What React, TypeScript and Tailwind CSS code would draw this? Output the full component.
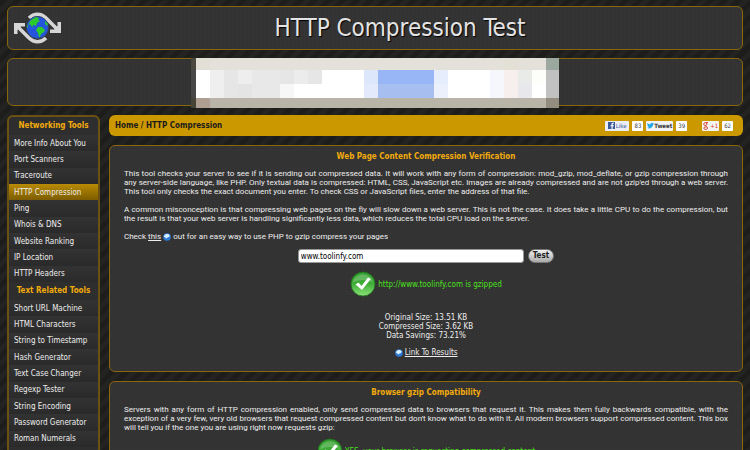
import type { ReactNode } from 'react'

const networkingTools = [
  'More Info About You',
  'Port Scanners',
  'Traceroute',
  'HTTP Compression',
  'Ping',
  'Whois & DNS',
  'Website Ranking',
  'IP Location',
  'HTTP Headers',
]

const textTools = [
  'Short URL Machine',
  'HTML Characters',
  'String to Timestamp',
  'Hash Generator',
  'Text Case Changer',
  'Regexp Tester',
  'String Encoding',
  'Password Generator',
  'Roman Numerals',
]

// x, y, width, height, fill
const adBlocks: [number, number, number, number, string][] = [
  [0, 0, 5, 12, '#4b493f'],
  [0, 12, 5, 28, '#484848'],
  [0, 40, 5, 10, '#464337'],
  [5, 0, 350, 12, '#e4e0da'],
  [5, 0, 14, 12, '#e2dfd7'],
  [313, 0, 14, 12, '#e3e1d6'],
  [355, 0, 13, 12, '#9ba8a0'],
  [5, 12, 350, 28, '#ffffff'],
  [19, 12, 14, 28, '#efefef'],
  [33, 12, 14, 28, '#e6e6e6'],
  [47, 12, 14, 14, '#eeeeee'],
  [47, 26, 14, 14, '#e4e4e4'],
  [61, 12, 28, 28, '#e8e8e8'],
  [89, 12, 14, 14, '#e6e6e6'],
  [89, 26, 14, 14, '#f7f7f7'],
  [103, 12, 14, 14, '#ececec'],
  [117, 12, 14, 14, '#e6e6e6'],
  [173, 12, 14, 14, '#dce7fc'],
  [173, 26, 14, 14, '#e3eafb'],
  [187, 12, 56, 14, '#98b6f5'],
  [187, 26, 56, 14, '#a6bef0'],
  [243, 12, 14, 14, '#e6eefd'],
  [243, 26, 14, 14, '#ebf0fc'],
  [299, 12, 14, 28, '#f5f7fd'],
  [313, 12, 14, 28, '#f6efed'],
  [327, 12, 14, 14, '#e8ebe7'],
  [327, 26, 14, 14, '#e7e7ec'],
  [341, 12, 14, 14, '#fdfdfa'],
  [355, 12, 13, 28, '#c1c1c1'],
  [5, 40, 350, 10, '#b9b4a8'],
  [5, 40, 14, 10, '#ae9f92'],
  [355, 40, 13, 10, '#938d80'],
]

const panel =
  'rounded-md border border-[#8a670b] bg-[#333] bg-[repeating-linear-gradient(90deg,rgba(255,255,255,0.01)_0_1px,transparent_1px_4px),repeating-linear-gradient(0deg,rgba(0,0,0,0.02)_0_1px,transparent_1px_3px)]'

const copy = "text-justify font-['Roboto',sans-serif]"

const Logo = () => (
  <svg viewBox="0 0 48 32" className="h-8 w-12" aria-hidden="true">
    <g fill="none" stroke="#d6d6d6" strokeWidth="3.6">
      <path d="M16 6C21 1 28 1 33 6L44 17" />
      <path d="M33 26C28 31 21 31 16 26L5 15" />
    </g>
    <path fill="#d6d6d6" d="M1 11h11v3.500H8l-3.500 3.500v4H1zM48 10v11H37v-3.500h4l3.500-3.500v-4z" />
    <circle cx="24.500" cy="15.500" r="11" fill="#2455dc" stroke="#37455c" strokeWidth="0.700" />
    <path
      fill="#2ccb2c"
      d="M18 8l5-3 3 1-1 2 2 1-3 2-1 3-2-1-2 1 2 2-2-1-2-3-2 1zM25 15l4 0 3 3-1 2-3 2-1 3-1 0-1-4-2-3zM32 9l3 3-1 2-2-2zM14 12l1 3-1 1z"
    />
  </svg>
)

const CheckIcon = () => (
  <svg viewBox="0 0 26 26" className="size-[26px] shrink-0" aria-hidden="true">
    <defs>
      <linearGradient id="check-ball" x1="0" y1="0" x2="0" y2="1">
        <stop offset="0" stopColor="#2f9b2b" />
        <stop offset="0.500" stopColor="#3fae38" />
        <stop offset="1" stopColor="#8ce279" />
      </linearGradient>
    </defs>
    <circle cx="13" cy="13" r="12" fill="url(#check-ball)" stroke="#1f6e1e" strokeWidth="0.800" />
    <path d="M3 11a10.200 9.500 0 0 1 20 0q-10-4-20 0z" fill="#fff" opacity="0.220" />
    <path d="M5.500 13.500l3-2 3 3.500L18 6.500l2.800 1.500L12 19z" fill="#fff" />
  </svg>
)

const GlobeIcon = () => (
  <svg viewBox="0 0 8 8" className="inline-block size-2 align-[-2px]" aria-hidden="true">
    <circle cx="4" cy="4" r="3.800" fill="#2c7ad6" />
    <path d="M0.800 3.400a3.400 3.400 0 0 1 6-1L6 4 4.500 4.600 3.600 5.600z" fill="#d8efff" />
  </svg>
)

const ToolList = ({ title, items }: { title: string; items: string[] }) => (
  <section>
    <h2 className="py-[3px] text-center leading-3 font-bold text-[#f2ab0c]">{title}</h2>
    <ul className="grid h-[147px] auto-rows-fr">
      {items.map((item) => (
        <li
          key={item}
          className={
            item === 'HTTP Compression'
              ? 'flex items-center bg-linear-to-b from-[#b98b04] to-[#7c5c00] px-[5px]'
              : 'flex items-center bg-linear-to-b from-[#333] to-[#2a2a2a] px-[5px]'
          }
        >
          <a href="#" className="whitespace-nowrap">
            {item}
          </a>
        </li>
      ))}
    </ul>
  </section>
)

const Count = ({ children }: { children: ReactNode }) => (
  <span className="rounded-[1px] bg-white px-[2px] text-center text-[6px] leading-[10px] text-[#444]">
    {children}
  </span>
)

const App = () => {
  return (
    <div className="flex h-screen flex-col gap-2 overflow-hidden bg-[#20201e] bg-[repeating-linear-gradient(135deg,#1d1d1c_0_5px,#232321_5px_10px)] px-[7px] pt-[6px] font-['DejaVu_Sans_Condensed','DejaVu_Sans',sans-serif] text-[8px] leading-[9px] text-[#eee]">
      <header className={`${panel} flex shrink-0 items-center py-[5px] pl-[5px] pr-[3px]`}>
        <Logo />
        <h1 className="flex-1 text-center text-[24px] leading-[34px] text-[#e4e4e4] [text-shadow:1px_1px_1px_#000] -my-px">
          HTTP Compression Test
        </h1>
      </header>

      <div className={`${panel} relative h-12 shrink-0`}>
        <svg
          viewBox="0 0 368 50"
          className="absolute -top-px left-1/2 h-[50px] w-[368px] -translate-x-1/2"
          shapeRendering="crispEdges"
          aria-hidden="true"
        >
          {adBlocks.map(([x, y, width, height, fill], i) => (
            <rect key={i} x={x} y={y} width={width} height={height} fill={fill} />
          ))}
        </svg>
      </div>

      <div className="mt-px flex items-start gap-[9px]">
        <nav className="w-[93px] shrink-0 rounded-md border-2 border-[#6b5212] bg-[#2e2e2e] pb-4">
          <ToolList title="Networking Tools" items={networkingTools} />
          <ToolList title="Text Related Tools" items={textTools} />
        </nav>

        <main className="flex min-w-0 flex-1 flex-col gap-[9px]">
          <div className="flex items-center justify-between rounded-md bg-[#cc9800] py-[5px] pr-[10px] pl-[6px]">
            <p className="leading-[11px] font-bold text-[#1b1b1b]">Home / HTTP Compression</p>
            <div className="flex items-center gap-[3px]">
              <button className="flex h-[10px] items-center gap-px rounded-[1px] bg-[#eceef5] px-[3px] text-[6px] text-[#3b5998]">
                <svg viewBox="0 0 6 6" className="size-[7px]" aria-hidden="true">
                  <path fill="#3b5998" d="M0 0h6v6H0z" />
                  <path fill="#fff" d="M3 6V3.600h-.8v-.9H3V2c0-.9.500-1.300 1.300-1.300H5v.9h-.500c-.4 0-.5.200-.5.500v.6h1l-.1.900H4V6z" />
                </svg>
                Like
              </button>
              <Count>83</Count>
              <button className="flex h-[10px] items-center rounded-[1px] bg-[#f3f3f3] px-px text-[6px] font-bold text-[#333]">
                <svg viewBox="0 0 24 24" className="size-[7px]" aria-hidden="true">
                  <path
                    fill="#22a7e8"
                    d="M23.900 4.600a10 10 0 0 1-2.800.8 5 5 0 0 0 2.100-2.700 10 10 0 0 1-3.100 1.200 5 5 0 0 0-8.400 4.500A14 14 0 0 1 1.600 3.200a5 5 0 0 0 1.500 6.500 5 5 0 0 1-2.200-.6 5 5 0 0 0 4 4.900 5 5 0 0 1-2.200.1 5 5 0 0 0 4.600 3.400A10 10 0 0 1 0 19.500a14 14 0 0 0 21.500-12.400 10 10 0 0 0 2.400-2.500z"
                  />
                </svg>
                Tweet
              </button>
              <Count>39</Count>
              <button className="ml-3 flex h-[10px] items-center gap-px rounded-[1px] bg-[#f5f5f5] px-px text-[6px] text-[#d23a27]">
                <svg viewBox="0 0 6 8" className="h-2 w-[6px]" fill="none" stroke="#d23a27" aria-hidden="true">
                  <path d="M5 .6H2.500C0 .8.300 3.500 2.300 3.500 4.200 3.500 4.300 1 3 .6M2.800 3.600c-.6.700 1.800 1.100 1.800 2.400C4.500 7.800.8 7.800.8 6.200.8 5 2.600 4.900 3.500 4.900" />
                </svg>
                +1
              </button>
              <Count>62</Count>
            </div>
          </div>

          <section className={`${panel} px-[14px] pt-[6px] pb-[14px]`}>
            <h2 className="mb-2 text-center leading-[9px] font-bold text-[#f2ab0c]">
              Web Page Content Compression Verification
            </h2>
            <p className={`${copy} mb-[9px]`}>
              This tool checks your server to see if it is sending out compressed data. It will work with any form of
              compression: mod_gzip, mod_deflate, or gzip compression through any server-side language, like PHP. Only
              textual data is compressed: HTML, CSS, JavaScript etc. Images are already compressed and are not gzip'ed
              through a web server. This tool only checks the exact document you enter. To check CSS or JavaScript
              files, enter the address of that file.
            </p>
            <p className={`${copy} mb-[9px]`}>
              A common misconception is that compressing web pages on the fly will slow down a web server. This is not
              the case. It does take a little CPU to do the compression, but the result is that your web server is
              handling significantly less data, which reduces the total CPU load on the server.
            </p>
            <p className={copy}>
              Check{' '}
              <a href="#" className="underline">
                this
              </a>{' '}
              <GlobeIcon /> out for an easy way to use PHP to gzip compress your pages
            </p>
            <form className="mt-2 flex items-center justify-center gap-1">
              <input
                aria-label="Website address"
                defaultValue="www.toolinfy.com"
                className="h-[14px] w-[226px] rounded-[3px] border border-[#999] bg-white px-[2px] text-black"
              />
              <button className="h-[14px] rounded-full border border-[#777] bg-linear-to-b from-[#f2f2f2] to-[#aaa] px-1 leading-3 font-bold text-[#222]">
                Test
              </button>
            </form>
            <p className="mt-2 flex items-center justify-center gap-[2px] text-[#4be01c]">
              <CheckIcon />
              http://www.toolinfy.com is gzipped
            </p>
            <div className="mt-4 text-center">
              <p>Original Size: 13.51 KB</p>
              <p>Compressed Size: 3.62 KB</p>
              <p>Data Savings: 73.21%</p>
              <p className="mt-2">
                <GlobeIcon />{' '}
                <a href="#" className="underline">
                  Link To Results
                </a>
              </p>
            </div>
          </section>

          <section className={`${panel} px-[14px] pt-[6px] pb-[14px]`}>
            <h2 className="mb-2 text-center leading-[9px] font-bold text-[#f2ab0c]">Browser gzip Compatibility</h2>
            <p className={copy}>
              Servers with any form of HTTP compression enabled, only send compressed data to browsers that request it.
              This makes them fully backwards compatible, with the exception of a very few, very old browsers that
              request compressed content but don't know what to do with it. All modern browsers support compressed
              content. This box will tell you if the one you are using right now requests gzip:
            </p>
            <p className="mt-[6px] flex items-center justify-center gap-[2px] text-[#4be01c]">
              <CheckIcon />
              YES, your browser is requesting compressed content
            </p>
          </section>
        </main>
      </div>
    </div>
  )
}
export default App
